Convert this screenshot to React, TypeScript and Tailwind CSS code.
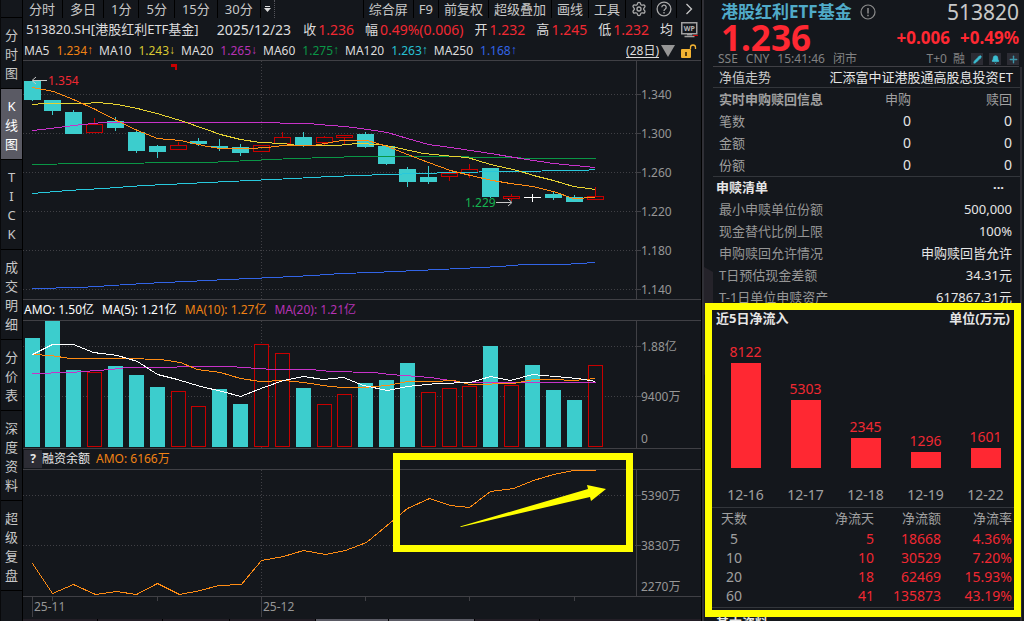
import React from 'react';
import { Bell, Pencil, Plus, Settings } from 'lucide-react';

type Kind = 'down' | 'up' | 'flat';

interface Bar {
    kind: Kind;
    x: number;
    open: number;
    close: number;
    high: number;
    low: number;
    vol: number;
}

const bar = (kind: Kind, x: number, open: number, close: number, high: number, low: number, vol: number): Bar => ({ kind, x, open, close, high, low, vol });

const bars: Bar[] = [
    bar('down', 24, 81, 100, 81, 101, 338),
    bar('down', 44, 100, 111, 100, 115, 321),
    bar('down', 65, 112, 134, 110, 134, 370),
    bar('up', 86, 124, 133, 118, 133, 373),
    bar('down', 107, 121, 128, 117, 131, 366),
    bar('down', 128, 132, 151, 131, 153, 375),
    bar('down', 149, 146, 152, 145, 158, 387),
    bar('up', 170, 145, 150, 142, 150, 392),
    bar('down', 190, 141, 144, 138, 146, 407),
    bar('down', 211, 146, 148, 139, 151, 389),
    bar('down', 232, 147, 153, 144, 156, 404),
    bar('up', 253, 145, 152, 145, 152, 345),
    bar('up', 274, 137, 144, 132, 144, 354),
    bar('down', 295, 137, 146, 132, 147, 388),
    bar('up', 316, 137, 143, 136, 145, 405),
    bar('up', 336, 135, 138, 135, 144, 395),
    bar('down', 357, 134, 147, 132, 148, 383),
    bar('down', 378, 146, 164, 146, 165, 380),
    bar('down', 399, 169, 182, 167, 187, 363),
    bar('down', 420, 177, 182, 166, 184, 393),
    bar('up', 441, 173, 177, 170, 181, 389),
    bar('up', 461, 169, 173, 164, 178, 387),
    bar('down', 482, 168, 197, 168, 198, 346),
    bar('up', 503, 196, 199, 194, 201, 386),
    bar('flat', 524, 197, 198, 194, 202, 365),
    bar('down', 545, 194, 198, 192, 200, 390),
    bar('down', 566, 197, 202, 195, 202, 400),
    bar('up', 587, 196, 200, 187, 200, 366),
];

// volume columns that are drawn hollow
const hollowVolume = [3, 7, 8, 11, 12, 14, 15, 19, 20, 21, 23, 27];

const priceLines = [
    { color: '#0a9646', points: '32,164 83,163 207,162 250,160 293,158 330,157 357,156 437,156 500,157 540,158 595,158' },
    { color: '#28c8dc', points: '32,193 67,190 103,188 143,185 167,184 207,182 250,180 293,178 330,176 357,175 417,173 457,172 500,171 583,170 595,169' },
    { color: '#3264e6', points: '32,288 80,287 127,284 163,282 187,281 227,279 273,277 313,275 340,273 373,272 417,270 460,268 500,266 523,264 563,264 595,262' },
    { color: '#c832c8', points: '32,130 50,128 73,125 103,122 250,122 308,123 330,125 345,126 367,129 387,132 407,138 428,144 450,147 490,153 520,158 553,163 595,167' },
    { color: '#e6d232', points: '32,104 43,103 83,103 98,102 117,104 137,108 160,114 183,121 203,128 220,134 240,139 260,142 283,143 297,145 337,145 357,143 380,144 400,148 423,153 453,156 467,157 490,164 517,170 533,175 553,180 573,186 595,189' },
    { color: '#ff8c14', points: '32,87 53,91 73,99 95,109 116,120 137,130 157,138 180,140 207,146 220,148 248,148 267,147 283,145 313,145 330,142 342,140 367,140 387,146 407,154 428,162 450,170 470,175 492,180 510,183 532,186 553,191 573,198 595,197' },
];

const volumeLines = [
    { color: '#c832c8', points: '32,373 70,372 110,369 127,367 167,367 187,366 230,366 257,368 273,369 310,369 330,371 373,372 390,374 430,377 463,382 490,382 553,382 595,382' },
    { color: '#ff8c14', points: '32,354 50,355 70,358 127,358 160,359 180,362 197,369 220,372 240,378 260,381 283,380 303,382 330,386 343,387 363,387 387,385 407,381 433,381 453,380 470,384 513,383 533,379 553,379 573,380 595,378' },
    { color: '#ffffff', points: '32,354 52,344 73,344 93,352 117,355 137,361 157,374 177,379 200,386 222,391 240,396 263,387 283,380 303,376 323,379 343,377 363,385 387,390 407,386 437,383 470,382 490,376 510,380 532,374 577,378 595,381' },
];

const marginLine = '32,563 52,593 73,584 95,594 116,591 136,594 157,583 179,594 200,590 218,585 241,584 261,560 283,556 303,550 325,554 345,550 366,542 407,508 429,498 450,505 469,507 490,491 513,488 533,480 553,474 573,470 595,470';

const maLegend = [
    { name: 'MA5', value: '1.234', arrow: '↑', color: 'flex text-[#f08214]' },
    { name: 'MA10', value: '1.243', arrow: '↓', color: 'flex text-[#d8c832]' },
    { name: 'MA20', value: '1.265', arrow: '↓', color: 'flex text-[#b432b4]' },
    { name: 'MA60', value: '1.275', arrow: '↑', color: 'flex text-[#0a9646]' },
    { name: 'MA120', value: '1.263', arrow: '↑', color: 'flex text-[#28c0d2]' },
    { name: 'MA250', value: '1.168', arrow: '↑', color: 'flex text-[#3264e6]' },
];

const quotes = [
    ['收', '1.236'],
    ['幅', '0.49%(0.006)'],
    ['开', '1.232'],
    ['高', '1.245'],
    ['低', '1.232'],
];

const sideTabs = ['分时图', 'K线图', 'TICK', '成交明细', '分价表', '深度资料', '超级复盘'];

const listRows = [
    ['最小申赎单位份额', '500,000'],
    ['现金替代比例上限', '100%'],
    ['申购赎回允许情况', '申购赎回皆允许'],
    ['T日预估现金差额', '34.31元'],
    ['T-1日单位申赎资产', '617867.31元'],
];

const inflow = [
    { date: '12-16', value: 8122, height: 105 },
    { date: '12-17', value: 5303, height: 68 },
    { date: '12-18', value: 2345, height: 30 },
    { date: '12-19', value: 1296, height: 16 },
    { date: '12-22', value: 1601, height: 20 },
];

const flowRows = [
    ['5', '5', '18668', '4.36%'],
    ['10', '10', '30529', '7.20%'],
    ['20', '18', '62469', '15.93%'],
    ['60', '41', '135873', '43.19%'],
];

const Grid: React.FC<{ rows: number[]; top: number; bottom: number }> = ({ rows, top, bottom }) => (
    <g shapeRendering="crispEdges" stroke="#404045" strokeWidth="1">
        {rows.map((y) => (
            <React.Fragment key={y}>
                <line x1="23" x2="636" y1={y + 0.5} y2={y + 0.5} strokeDasharray="1 2" />
                <line x1="636" x2="641" y1={y + 0.5} y2={y + 0.5} />
            </React.Fragment>
        ))}
        <line x1="261.5" x2="261.5" y1={top} y2={bottom} strokeDasharray="1 2" />
        <line x1="636.5" x2="636.5" y1={top} y2={bottom} />
    </g>
);

const AxisLabels: React.FC<{ items: [string, number][] }> = ({ items }) => (
    <g fill="#969696" fontSize="12">
        {items.map(([text, y]) => (
            <text key={text} x="641" y={y + 5}>{text}</text>
        ))}
    </g>
);

const Lines: React.FC<{ lines: { color: string; points: string }[] }> = ({ lines }) => (
    <g fill="none" strokeWidth="1" shapeRendering="crispEdges">
        {lines.map((line) => (
            <polyline key={line.points} points={line.points} stroke={line.color} transform="translate(0.5 0.5)" />
        ))}
    </g>
);

const Candle: React.FC<{ item: Bar }> = ({ item }) => {
    const { kind, x, open, close, high, low } = item;
    if (kind === 'flat') {
        return (
            <g fill="#fff">
                <rect x={x} y={open} width="17" height="1" />
                <rect x={x + 8} y={high} width="1" height={low - high} />
            </g>
        );
    }
    if (kind === 'down') {
        return (
            <g fill="#3ccdcd">
                <rect x={x} y={open} width="17" height={close - open} />
                <rect x={x + 8} y={high} width="1" height={low - high} />
            </g>
        );
    }
    return (
        <g fill="#c80000">
            <rect x={x + 0.5} y={open + 0.5} width="16" height={close - open - 1} fill="none" stroke="#c80000" />
            <rect x={x + 8} y={high} width="1" height={open - high} />
            <rect x={x + 8} y={close} width="1" height={low - close} />
        </g>
    );
};

const PriceChart = () => (
    <svg viewBox="23 61 678 238" className="block w-full">
        <Grid rows={[94, 133, 172, 211, 250, 289]} top={61} bottom={299} />
        <g shapeRendering="crispEdges">
            {bars.map((item) => <Candle key={item.x} item={item} />)}
            <path d="M171 64h6v6h-2v-3h-4z" fill="#c80000" />
        </g>
        <Lines lines={priceLines} />
        <g fill="none" stroke="#c8c8c8">
            <path d="M33 80.5H47M36 77l-4 3.500 4 3.500" />
            <path d="M496 202.500H511M508 199l4 3.500-4 3.500" />
        </g>
        <text x="48" y="85" fontSize="12" fill="#f02832">1.354</text>
        <text x="465" y="207" fontSize="12" fill="#14b450">1.229</text>
        <AxisLabels items={[['1.340', 94], ['1.300', 133], ['1.260', 172], ['1.220', 211], ['1.180', 250], ['1.140', 289]]} />
    </svg>
);

const VolumeChart = () => (
    <svg viewBox="23 321 678 127" className="block w-full">
        <Grid rows={[346, 396]} top={321} bottom={448} />
        <g shapeRendering="crispEdges">
            {bars.map((item, i) => hollowVolume.includes(i)
                ? <rect key={item.x} x={item.x + 1.5} y={item.vol - 0.5} width="14" height={447 - item.vol} fill="#14171c" stroke="#c80000" />
                : <rect key={item.x} x={item.x + 1} y={item.vol} width="15" height={447 - item.vol} fill="#3ccdcd" />)}
        </g>
        <Lines lines={volumeLines} />
        <AxisLabels items={[['1.88亿', 346], ['9400万', 396], ['0', 438]]} />
    </svg>
);

const MarginChart = () => (
    <svg viewBox="23 470 678 149" className="block w-full">
        <Grid rows={[495, 545]} top={470} bottom={596} />
        <Lines lines={[{ color: '#ff8c14', points: marginLine }]} />
        <g fill="#404045" shapeRendering="crispEdges">
            <rect x="23" y="596" width="678" height="1" />
            <rect x="32" y="597" width="1" height="20" />
            <rect x="261" y="597" width="1" height="20" />
            {[52, 157, 365, 469, 574].map((x) => <rect key={x} x={x} y="597" width="1" height="4" />)}
        </g>
        <AxisLabels items={[['5390万', 495], ['3830万', 545], ['2270万', 586]]} />
        <g fill="#969696" fontSize="12">
            <text x="34" y="611">25-11</text>
            <text x="263" y="611">25-12</text>
        </g>
    </svg>
);

const Toolbar = () => (
    <div className="flex justify-between text-[13px] leading-[18px] text-[#c8c8c8]">
        <div className="-ml-px flex">
            {['分时', '多日', '1分', '5分', '15分', '30分'].map((label) => (
                <button key={label} className="border-r border-black px-[7px]">{label}</button>
            ))}
            <button aria-label="更多周期" className="flex w-3.5 items-center justify-center border-r border-dotted border-[#55555c]">
                <svg viewBox="0 0 7 6" className="w-[7px]" fill="#dcdcdc"><path d="M1 0h5v1H1zM0 2h7L3.500 6z" /></svg>
            </button>
        </div>
        <div className="flex">
            {['综合屏', 'F9', '前复权', '超级叠加', '画线', '工具'].map((label, i) => (
                <button key={label} className={i === 0 ? 'border-x border-black px-[5px]' : 'border-r border-black px-[5px]'}>{label}</button>
            ))}
            <button aria-label="设置" className="flex w-[26px] items-center justify-center border-r border-black">
                <Settings size={16} strokeWidth={2} color="#aaaaaa" />
            </button>
            <button aria-label="帮助" className="flex w-[25px] items-center justify-center border-r border-black">
                <svg viewBox="0 0 16 16" className="w-4" fill="none" stroke="#aaaaaa" strokeWidth="1.300">
                    <circle cx="8" cy="8" r="6.900" />
                    <path d="M5.800 6.300a2.200 2.200 0 1 1 3.300 1.900C8.300 8.700 8 9 8 10M8 11v1.500" />
                </svg>
            </button>
            <button aria-label="展开" className="flex w-6 items-center justify-center">
                <svg viewBox="0 0 8 12" className="w-2" fill="none" stroke="#c8c8c8" strokeWidth="1.300"><path d="M1.500 1l5 5-5 5" /></svg>
            </button>
        </div>
    </div>
);

const QuoteRow = () => (
    <div className="flex items-center justify-between whitespace-nowrap pl-[3px] pr-[3px] text-[13px] leading-[23px] text-[#dcdcdc]">
        <div className="flex items-center">
            <span>513820.SH[港股红利ETF基金]</span>
            <span className="ml-[18px] text-sm leading-[23px]">2025/12/23</span>
            <div className="ml-3 flex gap-[11px]">
                {quotes.map(([name, value]) => (
                    <span key={name} className="flex items-center gap-0.5">
                        {name}
                        <span className="text-sm leading-[23px] text-[#f02832]">{value}</span>
                    </span>
                ))}
                <span>均</span>
            </div>
        </div>
        <svg viewBox="0 0 17 16" className="w-[17px] shrink-0" fill="none">
            <rect x="0.750" y="0.750" width="15" height="11" stroke="#a0a0a0" strokeWidth="1.500" />
            <path d="M6 12.500h5M3.500 14.500h10" stroke="#a0a0a0" strokeWidth="1.500" />
            <text x="8.300" y="9" fontSize="7" fontWeight="700" fill="#b4b4b4" textAnchor="middle">WP</text>
            <path d="M12 13.500h5" stroke="#c80000" />
        </svg>
    </div>
);

const MaRow = () => (
    <div className="flex items-center justify-between whitespace-nowrap border-b border-[#404045] pl-px pr-1 text-xs leading-[19px] text-[#dcdcdc]">
        <div className="flex gap-1.5">
            {maLegend.map((ma) => (
                <span key={ma.name} className="flex gap-[7px]">
                    {ma.name}
                    <span className={ma.color}>{ma.value}<span className="font-['Liberation_Sans']">{ma.arrow}</span></span>
                </span>
            ))}
        </div>
        <div className="flex items-center">
            <button className="underline underline-offset-2">(28日)</button>
            <svg viewBox="0 0 14 12" className="ml-0.5 w-3.5" fill="#969696"><path d="M0 0h14L7 12z" /></svg>
            <svg viewBox="0 0 16 14" className="ml-1.5 w-4">
                <rect x="0" y="5" width="10" height="9" rx="1" fill="#f5b432" />
                <rect x="4" y="8" width="2" height="4" fill="#5a4010" />
                <path d="M9.500 5V3.500a2.500 2.500 0 0 1 5 0V5" fill="none" stroke="#f5b432" strokeWidth="1.300" />
            </svg>
        </div>
    </div>
);

const QuoteHeader = () => (
    <header className="whitespace-nowrap pl-[17px] pr-[5px]">
        <div className="flex items-center justify-between leading-6">
            <h1 className="flex items-center gap-2 text-[17px] font-bold text-[#50aac8]">
                港股红利ETF基金
                <svg viewBox="0 0 16 16" className="w-4" fill="none" stroke="#8c8c8c" strokeWidth="1.200">
                    <circle cx="8" cy="8" r="7" />
                    <path d="M8 4v5.500M8 10.800v1.500" strokeWidth="1.500" />
                </svg>
            </h1>
            <span className="text-[21px] leading-6 text-[#c8c8c8]">513820</span>
        </div>
        <div className="flex items-center justify-between font-bold leading-7 text-[#ff2832]">
            <span className="text-[35px] leading-7">1.236</span>
            <span className="flex gap-2.5 text-[17px]"><span>+0.006</span><span>+0.49%</span></span>
        </div>
        <div className="-ml-[3px] flex items-center justify-between text-xs leading-[14px] text-[#828282]">
            <span className="flex gap-2"><span>SSE</span><span>CNY</span><span>15:41:46</span><span>闭市</span></span>
            <span className="flex items-center gap-1.5">
                <span>T+0</span>
                <span>融</span>
                <button aria-label="编辑" className="flex size-3 items-center justify-center bg-[#2c2c34]"><Pencil size={9} color="#3cbed2" fill="#3cbed2" /></button>
                <button aria-label="提醒" className="flex size-3 items-center justify-center bg-[#2c2c34]"><Bell size={9} color="#3cbed2" fill="#3cbed2" /></button>
                <button aria-label="添加" className="flex size-3 items-center justify-center bg-[#2c2c34]"><Plus size={11} strokeWidth={3} color="#3c96aa" /></button>
            </span>
        </div>
    </header>
);

const InflowPanel = () => (
    <section className="relative -mr-px -mt-[5px] ml-px border-[7px] border-[#ffff00] bg-[#14171c] pb-0.5">
        <h2 className="flex justify-between pl-1 pr-1 text-[13px] font-bold leading-[17px] text-[#e6e6e6]">
            <span>近5日净流入</span>
            <span>单位(万元)</span>
        </h2>
        <div className="flex items-end justify-between border-b border-[#33363b] pb-[3px] pl-[15px] pr-2.5 pt-[14px] text-sm">
            {inflow.map((day) => (
                <div key={day.date} className="flex w-[37px] flex-col items-center">
                    <span className="leading-[22px] text-[#f02832]">{day.value}</span>
                    <div className="w-[30px] bg-[#ff2832]" style={{ height: day.height }} />
                    <span className="pt-[18px] leading-[18px] text-[#a0a0a0]">{day.date}</span>
                </div>
            ))}
        </div>
        <div className="border-b border-[#33363b] pb-0.5 pl-[9px] pr-0.5">
            <table className="w-full text-right text-sm leading-[19px]">
                <thead>
                    <tr className="text-[13px] leading-[21px] text-[#a0a0a0]">
                        <th className="w-[26px] p-0 text-center font-normal">天数</th>
                        <th className="p-0 font-normal">净流天</th>
                        <th className="w-[67px] p-0 font-normal">净流额</th>
                        <th className="w-[71px] p-0 font-normal">净流率</th>
                    </tr>
                </thead>
                <tbody className="text-[#f02832]">
                    {flowRows.map(([days, net, amount, rate]) => (
                        <tr key={days}>
                            <td className="p-0 text-center text-[#a0a0a0]">{days}</td>
                            <td className="p-0">{net}</td>
                            <td className="p-0">{amount}</td>
                            <td className="p-0">{rate}</td>
                        </tr>
                    ))}
                </tbody>
            </table>
        </div>
    </section>
);

const App = () => {
    return (
        <div className="flex h-screen overflow-hidden bg-[#14171c] font-['Noto_Sans','Noto_Sans_CJK_SC',sans-serif]">
            <nav className="w-[23px] shrink-0 border-l border-r border-l-[#08090b] border-r-black pt-[17px]">
                <div className="border-t border-black">
                    {sideTabs.map((tab) => (
                        <button
                            key={tab}
                            className={tab === 'K线图'
                                ? 'flex w-full flex-col items-center border-b border-black bg-[#5a5a64] pb-[5px] pt-2 text-[13px] leading-[19px] text-white'
                                : 'flex w-full flex-col items-center border-b border-black pb-[5px] pt-2 text-[13px] leading-[19px] text-[#c8c8c8]'}
                        >
                            {tab.split('').map((char, i) => <span key={i}>{char}</span>)}
                        </button>
                    ))}
                </div>
            </nav>

            <main className="min-w-0 flex-1">
                <Toolbar />
                <QuoteRow />
                <MaRow />
                <PriceChart />
                <div className="flex gap-2 whitespace-nowrap border-y border-[#404045] pl-px text-xs leading-5 text-white">
                    <span>AMO: 1.50亿</span>
                    <span>MA(5): 1.21亿</span>
                    <span className="text-[#f08214]">MA(10): 1.27亿</span>
                    <span className="text-[#b432b4]">MA(20): 1.21亿</span>
                </div>
                <VolumeChart />
                <div className="relative">
                    <div className="flex items-center whitespace-nowrap border-y border-[#404045] pl-px text-xs leading-5 text-[#e6e6e6]">
                        <button className="w-[18px] bg-[#2c2c34] font-bold leading-[18px]">?</button>
                        <span>融资余额</span>
                        <span className="ml-1.5 text-[#f08214]">AMO: 6166万</span>
                    </div>
                    <MarginChart />
                    {/* highlight frame and arrow over the margin balance curve */}
                    <svg viewBox="23 448 678 171" className="pointer-events-none absolute inset-0 w-full">
                        <rect x="396.500" y="456.500" width="233" height="92" fill="none" stroke="#ffff00" strokeWidth="7" />
                        <path d="M460 526.500L588 489l-1-4 19 4-15 12-1-4L461 527z" fill="#ffff00" />
                    </svg>
                </div>
                <div className="flex h-0.5 gap-px bg-black">
                    <div className="w-[74px] bg-[#231e26]" />
                    <div className="w-16 bg-[#231e26]" />
                    <div className="w-[66px] bg-[#231e26]" />
                    <div className="w-[85px] bg-[#231e26]" />
                    <div className="w-[72px] bg-[#5a5a64]" />
                    <div className="w-[85px] bg-[#5a5a64]" />
                    <div className="w-16 bg-[#231e26]" />
                    <div className="flex-1 bg-[#231e26]" />
                </div>
            </main>

            <div className="w-[3px] shrink-0 border-l border-black bg-[#303036]" />

            <aside className="relative w-80 shrink-0">
                <svg viewBox="0 0 9 108" className="absolute left-0 top-[267px] w-[9px]" fill="#25232a"><path d="M0 0l9 5v98l-9 5z" /></svg>
                <QuoteHeader />
                <div className="ml-[9px] mr-[5px] border-b border-[#404045]" />
                <div className="mr-0.5 border-r-2 border-[#2c2c32] text-[13px]">
                    <div className="ml-[9px] flex justify-between whitespace-nowrap border-b border-[#33363b] pl-1.5 pr-[7px] leading-5 text-[#c8c8c8]">
                        <span>净值走势</span>
                        <span className="text-[#e6e6e6]">汇添富中证港股通高股息投资ET</span>
                    </div>
                    <div className="ml-[9px] border-b border-[#33363b] pl-1.5 pr-2">
                        <table className="w-full text-right leading-[22px] text-[#a0a0a0]">
                            <thead>
                                <tr>
                                    <th className="p-0 text-left">实时申购赎回信息</th>
                                    <th className="p-0 font-normal">申购</th>
                                    <th className="w-[101px] p-0 font-normal">赎回</th>
                                </tr>
                            </thead>
                            <tbody>
                                {['笔数', '金额', '份额'].map((name) => (
                                    <tr key={name}>
                                        <td className="p-0 text-left">{name}</td>
                                        <td className="p-0 text-sm leading-[22px] text-[#e6e6e6]">0</td>
                                        <td className="p-0 text-sm leading-[22px] text-[#e6e6e6]">0</td>
                                    </tr>
                                ))}
                            </tbody>
                        </table>
                    </div>
                    <div className="flex justify-between pl-3 pr-4 font-bold leading-[21px] text-[#e6e6e6]">
                        <h2>申赎清单</h2>
                        <button aria-label="更多">···</button>
                    </div>
                    <dl className="pl-[15px] pr-2 leading-[22px]">
                        {listRows.map(([name, value]) => (
                            <div key={name} className="flex justify-between">
                                <dt className="text-[#969696]">{name}</dt>
                                <dd className="text-[#e6e6e6]">{value}</dd>
                            </div>
                        ))}
                    </dl>
                    <InflowPanel />
                    <div className="flex justify-between pl-3 pr-4 font-bold leading-3 text-[#e6e6e6]">
                        <h2>基本资料</h2>
                        <button aria-label="更多">···</button>
                    </div>
                </div>
            </aside>
        </div>
    );
};

export default App;
